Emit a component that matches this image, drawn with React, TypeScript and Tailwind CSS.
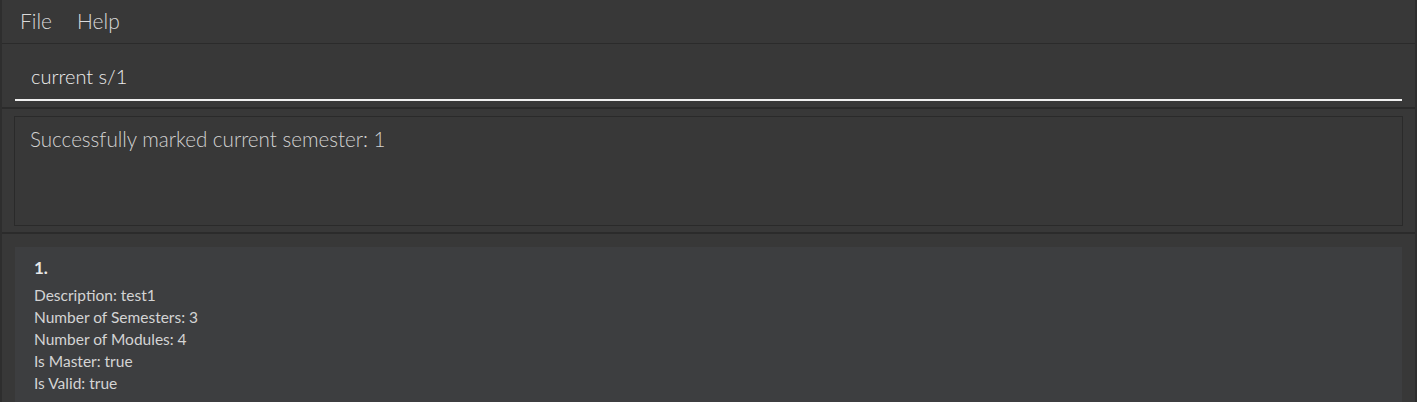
import React from "react";

const font = { fontFamily: '"Segoe UI", Lato, "Noto Sans", sans-serif' };

export default function App() {
  return (
    <div
      className="w-[1417px] h-[402px] overflow-hidden bg-[#383838] flex flex-col border-l-2 border-r-2 border-[#2e2e2e]"
      style={font}
    >
      <div className="h-[44px] shrink-0 flex items-center gap-[25px] pl-[18px] pb-[2px] border-b border-[#2b2b2b] text-[21px] font-light text-[#dadada]">
        <span>File</span>
        <span>Help</span>
      </div>
      <div className="h-[65px] shrink-0 px-[13px] pt-[17px] border-b-2 border-[#2b2b2b]">
        <div className="h-[40px] border-b-2 border-[#f0f0f0] pl-[16px] text-[20px] font-light leading-[30px] text-[#ececec]">
          current s/1
        </div>
      </div>
      <div className="h-[125px] shrink-0 px-[12px] pt-[7px] border-b-2 border-[#2b2b2b]">
        <div className="h-[110px] border border-[#2a2a2a] px-[15px] pt-[7px] text-[20.6px] font-light leading-[30px] text-[#d2d2d2]">
          Successfully marked current semester: 1
        </div>
      </div>
      <div className="flex-1 px-[13px] pt-[13px]">
        <div className="h-full bg-[#3d3e40] pl-[19px] pt-[5px] text-[#d4d4d4]">
          <div className="text-[17px] font-bold leading-[32px] text-[#e8e8e8]">1.</div>
          <div className="text-[15.5px] leading-[22px]">
            <div>Description: test1</div>
            <div>Number of Semesters: 3</div>
            <div>Number of Modules: 4</div>
            <div>Is Master: true</div>
            <div>Is Valid: true</div>
          </div>
        </div>
      </div>
    </div>
  );
}
